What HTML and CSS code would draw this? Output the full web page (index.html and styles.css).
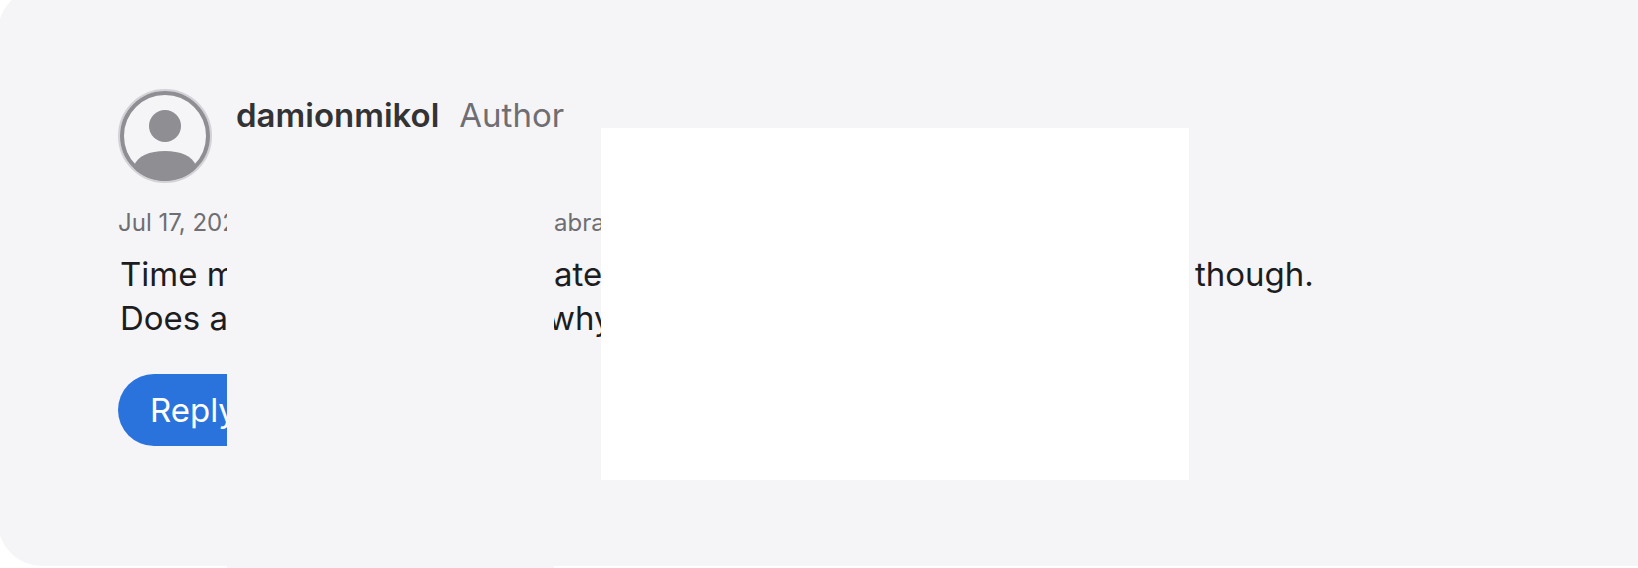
FILE: index.html
```html
<!DOCTYPE html>
<html lang="en">
	<head>
		<meta charset="UTF-8">
		<title>damionmikol</title>
		<link rel="stylesheet" href="styles.css">
	</head>
	<body>
		<article class="card">
			<header class="author">
				<svg class="avatar" viewBox="0 0 94 94" aria-hidden="true">
					<defs>
						<clipPath id="face">
							<circle cx="47" cy="47" r="45"/>
						</clipPath>
					</defs>
					<circle cx="47" cy="47" r="46" fill="#f5f5f7" stroke="#d2d2d7" stroke-width="2"/>
					<circle cx="47" cy="47" r="43" fill="none" stroke="#8e8e93" stroke-width="4"/>
					<circle cx="47" cy="37" r="16" fill="#8e8e93"/>
					<path d="M16 77C19 67 32 62 47 62S75 67 78 77L78 94H16Z" fill="#8e8e93" clip-path="url(#face)"/>
				</svg>
				<div class="names">
					<strong class="name">damionmikol</strong>
					<span class="role">Author</span>
				</div>
			</header>
			<div class="row date">
				<span class="start">Jul 17, 202</span>
				<span class="middle inset">abra</span>
			</div>
			<div class="row text first">
				<span class="start">Time m</span>
				<span class="middle inset">ate</span>
				<span class="end">though.</span>
			</div>
			<div class="row text">
				<span class="start">Does a</span>
				<span class="middle">why</span>
			</div>
			<button type="button" class="reply">Reply</button>
		</article>
		<div class="cover gray"></div>
		<div class="cover white"></div>
	</body>
</html>
```

FILE: styles.css
```css
* {
	box-sizing: border-box;
}
body {
	position: relative;
	min-height: 100vh;
	margin: 0;
	overflow: hidden;
	background: #fff;
	font-family: Inter, "Liberation Sans", sans-serif;
}
.card {
	margin: -12px -44px 0 -2px;
	padding: 101px 164px 120px 120px;
	border-radius: 44px;
	background: #f5f5f7;
	color: #1d1d1f;
}
.author {
	display: flex;
	gap: 24px;
}
.avatar {
	width: 94px;
	height: 94px;
}
.names {
	display: flex;
	gap: 20px;
	padding-top: 4px;
	font-size: 33px;
	line-height: 44px;
}
.name {
	color: #333336;
	font-weight: 600;
}
.role {
	color: #6e6e73;
}
.row {
	display: grid;
	grid-template-columns: 109px 321px 53px 594px 1fr;
	white-space: nowrap;
}
.middle {
	grid-column: 3;
}
.end {
	grid-column: 5;
}
.row .inset {
	padding-left: 6px;
}
.date {
	margin-top: 24px;
	color: #6e6e73;
	font-size: 24px;
	line-height: 32px;
}
.text {
	font-size: 33px;
	line-height: 44px;
}
.text .start {
	padding-left: 2px;
}
.first {
	margin-top: 13px;
}
.reply {
	display: block;
	height: 72px;
	margin-top: 34px;
	padding: 0 32px;
	border: 0;
	border-radius: 36px;
	background: #2b73dc;
	color: #fff;
	font-family: inherit;
	font-size: 33px;
}

/* blocks that lie over the comment */
.cover {
	position: absolute;
}
.gray {
	top: 200px;
	bottom: 0;
	left: 227px;
	width: 327px;
	background: #f5f5f7;
}
.white {
	top: 128px;
	left: 601px;
	width: 588px;
	height: 352px;
	background: #fff;
}
```
